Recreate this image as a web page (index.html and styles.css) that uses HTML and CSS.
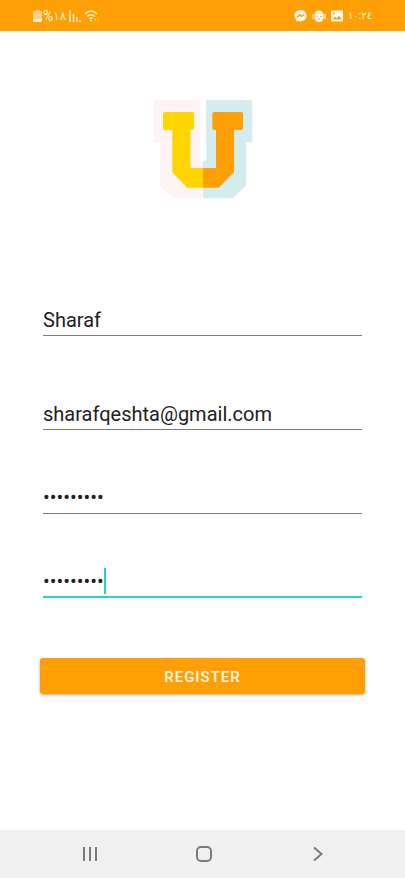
FILE: index.html
```html
<!DOCTYPE html>
<html lang="en">
<head>
<meta charset="utf-8">
<meta name="viewport" content="width=device-width, initial-scale=1">
<title>Register</title>
<link rel="stylesheet" href="styles.css">
</head>
<body>
<header class="status">
  <div class="status-group">
    <svg class="battery" width="9" height="12" viewBox="0 0 9 12"><path d="M2 1q0-1 1-1h3q1 0 1 1h1q1 0 1 1v8H0V2q0-1 1-1z" fill="#ffd08a"/><path d="M0 9h9v2q0 1-1 1H1q-1 0-1-1z" fill="#fff4d8"/></svg>
    <span class="percent"><span class="sign">%</span><span>١٨</span></span>
    <svg class="signal" width="12" height="12" viewBox="0 0 12 12"><path d="M1 0v12M4.500 4v8M8 7v5M11 10v2" stroke="#fff0cf" stroke-width="1.500" fill="none"/></svg>
    <svg width="15" height="12" viewBox="0 0 15 12" fill="none" stroke="#ffefcb" stroke-width="1.400"><path d="M0 4Q6-1.800 12 4M2.200 6.500q3.800-3.400 7.600 0M4.300 8.800q1.700-1.500 3.400 0"/><circle cx="6" cy="10.500" r="1" fill="#ffefcb" stroke="none"/><path d="M10 8.500v3M13 8.500v3" stroke="#ffc25c" stroke-width="1.200"/></svg>
  </div>
  <div class="status-group status-right">
    <svg width="13" height="12" viewBox="0 0 13 12"><path d="M6.500 0C3 0 .5 2.500.5 5.700c0 1.800.8 3.200 2 4.200V12l2-1.100c.6.200 1.300.3 2 .3 3.500 0 6-2.400 6-5.500S10 0 6.500 0z" fill="#fffaf0"/><path d="M3 7.400l2.500-2.700 2 1.600L10 4.500" fill="none" stroke="#ff9f06" stroke-width="1.400"/></svg>
    <svg width="14" height="12" viewBox="0 0 14 12"><path d="M2.500 5a4.500 4.500 0 0 1 9 0v3a4.500 4 0 0 1-9 0z" fill="#fffaf0"/><path d="M1 4v5M13 4v5" stroke="#ffe2b0" stroke-width="1.600"/><path d="M3.500 4q3.500-2.500 7 0" fill="none" stroke="#ffd893"/><circle cx="5" cy="6.500" r=".7" fill="#ff9f06"/><circle cx="9" cy="6.500" r=".7" fill="#ff9f06"/><path d="M6 9h2" stroke="#ff9f06"/></svg>
    <svg width="12" height="12" viewBox="0 0 12 12"><rect y=".5" width="12" height="11" rx="1" fill="#fffaf0"/><path d="M1.500 9.500l2.500-3 1.800 1.900L8 5.500l2.700 4z" fill="#ff9f06"/><path d="M2 2.500h2v2H2z" fill="#ffb13a"/></svg>
    <time class="clock">١٠:٢٤</time>
  </div>
</header>

<main class="page">
  <svg class="logo" viewBox="39 27 300 300" role="img" aria-label="U">
    <path d="M48 30H180V212H189V325H100L60 287V157H42V36Q42 30 48 30Z" fill="#fff3f3"/>
    <path d="M198 30H331Q337 30 337 36V157H318V287L278 325H189V212H198Z" fill="#d5ecec"/>
    <path d="M75 66H156Q162 66 162 72V114Q162 120 156 120H151V234H189V293H142L97 247V120H75Q69 120 69 114V72Q69 66 75 66Z" fill="#ffd500"/>
    <path d="M223 66H303Q309 66 309 72V114Q309 120 303 120H282V247L236 293H189V234H228V120H223Q217 120 217 114V72Q217 66 223 66Z" fill="#ff9f06"/>
  </svg>
  <form class="form">
    <div class="field field-wide"><input type="text" aria-label="Name" value="Sharaf"></div>
    <div class="field field-wide"><input type="email" aria-label="Email" value="sharafqeshta@gmail.com"></div>
    <div class="field"><input type="password" aria-label="Password" value="password1"></div>
    <div class="field active"><input type="password" aria-label="Confirm password" value="password1"><span class="caret"></span></div>
    <button class="register" type="button">REGISTER</button>
  </form>
</main>

<nav class="navbar">
  <button type="button" aria-label="Recent apps"><svg width="18" height="18" viewBox="0 0 18 18"><path d="M3 2v14M9 2v14M15 2v14"/></svg></button>
  <button type="button" aria-label="Home"><svg width="18" height="18" viewBox="0 0 18 18"><rect x="2" y="2" width="14" height="14" rx="4"/></svg></button>
  <button type="button" aria-label="Back"><svg width="18" height="18" viewBox="0 0 18 18"><path d="M5 2.500L12.500 9 5 15.500"/></svg></button>
</nav>
</body>
</html>
```
FILE: styles.css
```css
* { box-sizing: border-box; }

body {
  margin: 0;
  min-height: 100vh;
  display: flex;
  flex-direction: column;
  background: #fff;
  font-family: Roboto, "DejaVu Sans", sans-serif;
  color: #212121;
}

.status {
  display: flex;
  align-items: center;
  justify-content: space-between;
  height: 31px;
  padding: 0 33px;
  background: #ff9f06;
  color: #fff4dc;
  font-size: 12px;
}

.status-group {
  display: flex;
  align-items: center;
  gap: 4px;
}

.status-right { gap: 5px; }

.percent {
  display: flex;
  align-items: center;
  margin: 0 -1px 0 -3px;
}

.sign { font-size: 14px; }

.clock { font-size: 10px; }

.page {
  flex: 1;
  display: flex;
  flex-direction: column;
  padding: 68px 40px 0;
}

.logo {
  width: 100px;
  height: 100px;
  align-self: center;
}

.form {
  display: flex;
  flex-direction: column;
  padding-top: 43px;
}

.field {
  position: relative;
  margin: 48px 3px 0;
  height: 36px;
  border-bottom: 1px solid #7d7d7d;
}

.field-wide { margin-top: 58px; }

.field input {
  display: block;
  width: 100%;
  height: 35px;
  padding: 4px 0 0;
  border: 0;
  outline: 0;
  background: none;
  color: inherit;
  font-family: inherit;
  font-size: 20px;
}

.field input[type="password"] { padding-top: 2px; }

.active { border-bottom: 2px solid #2bd0c0; }

.caret {
  position: absolute;
  left: 61px;
  top: 6px;
  width: 2px;
  height: 26px;
  background: #2bd0c0;
}

.register {
  height: 36px;
  margin-top: 60px;
  padding: 2px 0 0;
  border: 0;
  border-radius: 3px;
  background: #ff9f06;
  box-shadow: 0 1px 3px rgba(0, 0, 0, 0.35);
  color: #fff8e8;
  font-family: inherit;
  font-size: 15px;
  font-weight: 500;
  letter-spacing: 1px;
}

.navbar {
  display: flex;
  justify-content: space-between;
  align-items: center;
  height: 48px;
  padding: 0 78px 0 81px;
  background: #f0f0f0;
}

.navbar button {
  display: flex;
  padding: 0;
  border: 0;
  background: none;
}

.navbar svg {
  fill: none;
  stroke: #7b7b7b;
  stroke-width: 2;
}
```
